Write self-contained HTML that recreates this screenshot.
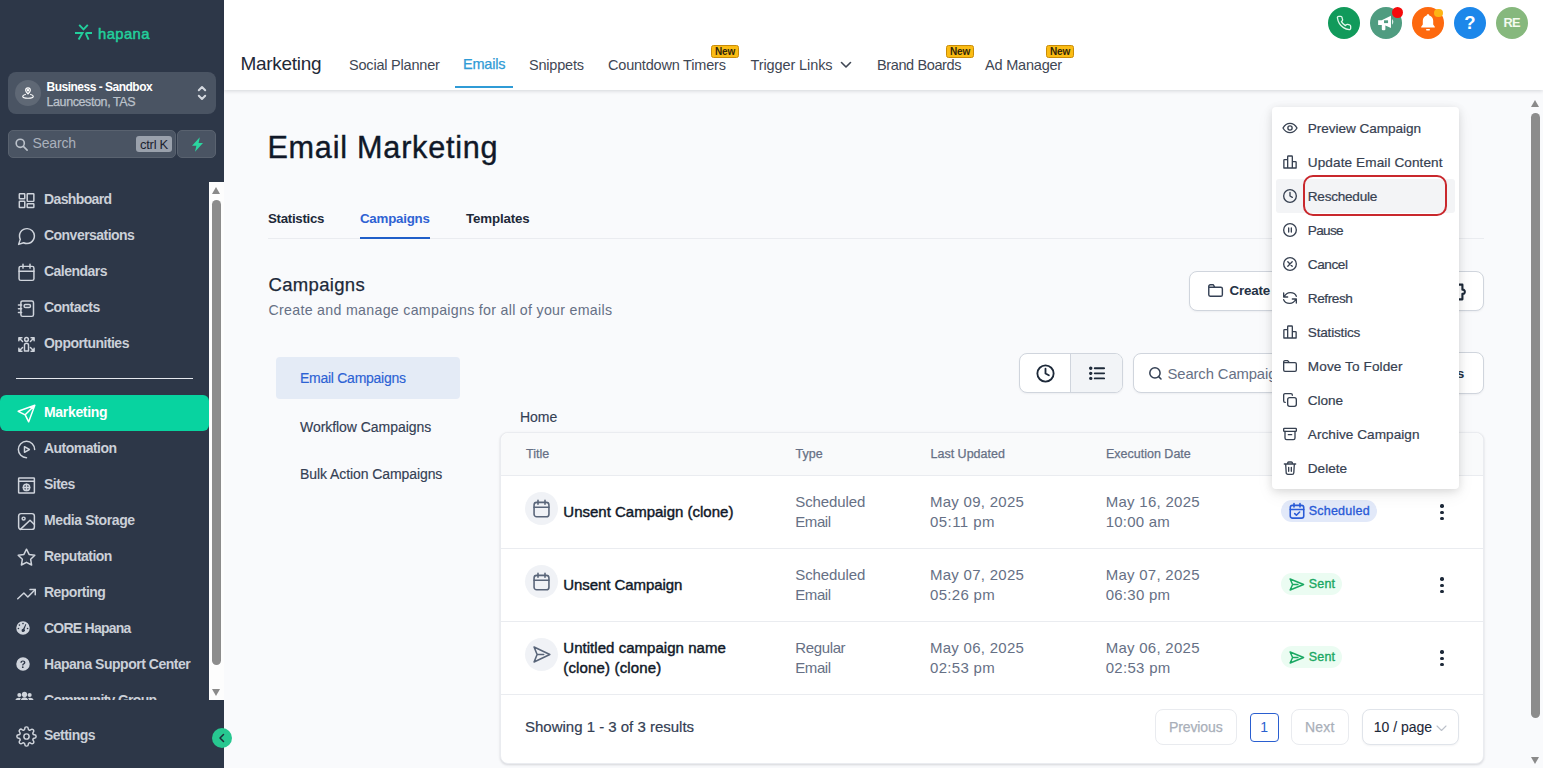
<!DOCTYPE html>
<html lang="en">
<head>
<meta charset="utf-8">
<title>Email Marketing</title>
<style>
*{box-sizing:border-box;margin:0;padding:0}
html,body{width:1543px;height:768px;overflow:hidden;background:#f9fafc;font-family:"Liberation Sans",sans-serif;}
.abs{position:absolute}
svg{display:block}
/* ---------- sidebar ---------- */
#sb{position:absolute;left:0;top:0;width:224px;height:768px;background:#2d3748;color:#dfe3ea;}
#biz{position:absolute;left:8px;top:72px;width:208px;height:42px;border-radius:8px;background:#4a5463;}
#biz .av{position:absolute;left:7px;top:8px;width:26px;height:26px;border-radius:50%;background:#5f6875;}
#biz .t1{position:absolute;left:38.5px;top:8px;font-size:12px;font-weight:700;color:#fff;letter-spacing:-.5px;white-space:nowrap}
#biz .t2{position:absolute;left:38.5px;top:23px;font-size:12.5px;color:#bcc2cb;letter-spacing:-.4px;white-space:nowrap;-webkit-text-stroke:.25px #bcc2cb}
#srch{position:absolute;left:8px;top:130px;width:168px;height:28px;border-radius:5px;background:#4a5463;border:1px solid #59626f}
#srch .ph{position:absolute;left:23.5px;top:4px;font-size:14px;color:#aab1bc;letter-spacing:-.15px}
#srch .kb{position:absolute;left:127px;top:5px;width:36px;height:16px;border-radius:3px;background:#9aa1ac;color:#1c2330;font-size:13px;line-height:17px;text-align:center;letter-spacing:-.3px}
#bolt{position:absolute;left:177px;top:130px;width:39px;height:28px;border-radius:5px;background:#4a5463;border:1px solid #59626f}
.nav{position:absolute;left:0;width:209px;height:36px;}
.nav .tx{position:absolute;left:44px;top:9px;font-size:14px;font-weight:700;color:#cbd0d8;letter-spacing:-.53px;white-space:nowrap;line-height:16px}
.nav svg{position:absolute;left:15.5px;top:7.5px;width:21px;height:21px;stroke:#cfd4dc;fill:none;stroke-width:1.7;stroke-linecap:round;stroke-linejoin:round}
.nav.on{background:#08d3a0;border-radius:6px}
.nav svg.fa{stroke:none;fill:#cfd4dc;left:14px;top:8px;width:18px;height:18px}
.nav.on .tx{color:#fff}
.nav.on svg{stroke:#fff}
#sbscroll{position:absolute;left:209px;top:182px;width:15px;height:518px;background:#fdfdfd}
#sbscroll .th{position:absolute;left:3px;top:18px;width:9px;height:465px;border-radius:5px;background:#8c8c8c}
.tri-u{position:absolute;width:0;height:0;border-left:4.5px solid transparent;border-right:4.5px solid transparent;border-bottom:7px solid #8a8a8a}
.tri-d{position:absolute;width:0;height:0;border-left:4.5px solid transparent;border-right:4.5px solid transparent;border-top:7px solid #8a8a8a}
/* ---------- header ---------- */
#hd{position:absolute;left:224px;top:0;width:1319px;height:90px;background:#fff;box-shadow:0 1px 4px rgba(16,24,40,.16)}
#hd .ttl{position:absolute;left:16.5px;top:53px;font-size:19px;color:#1f2937;letter-spacing:-.3px;line-height:22px}
.tn{position:absolute;top:56px;font-size:14.5px;color:#3f4754;white-space:nowrap;line-height:18px;letter-spacing:-.2px}
.new{position:absolute;top:45px;height:13px;width:28px;border-radius:2.500px;background:#fbbc14;border:1px solid #c98c08;color:#33270a;font-size:10px;font-weight:700;line-height:11px;text-align:center;letter-spacing:-.2px}
.cir{position:absolute;top:7px;width:32px;height:32px;border-radius:50%}
/* ---------- main ---------- */
#main{position:absolute;left:224px;top:90px;width:1319px;height:678px;}
.h1{position:absolute;left:267.4px;top:127.6px;font-size:30.6px;color:#101828;line-height:38px;white-space:nowrap;letter-spacing:.78px;-webkit-text-stroke:.4px #101828}
.tab{position:absolute;top:209.8px;font-size:13.3px;font-weight:700;color:#1d2939;line-height:18px;white-space:nowrap;letter-spacing:-.3px}
.lm{position:absolute;left:300px;font-size:14px;color:#344054;line-height:18px;white-space:nowrap;-webkit-text-stroke:.15px currentColor}
.btn{position:absolute;background:#fff;border:1px solid #d0d5dd;border-radius:8px;box-shadow:0 1px 2px rgba(16,24,40,.05)}
#card{position:absolute;left:500px;top:432px;width:984px;height:332px;background:#fff;border-radius:8px;border:1px solid #eaecf0;box-shadow:0 1px 3px rgba(16,24,40,.1),0 1px 2px rgba(16,24,40,.06)}
.th{position:absolute;top:12.8px;font-size:12.5px;color:#667085;line-height:16px;white-space:nowrap;-webkit-text-stroke:.25px #667085}
.hl{position:absolute;left:0;width:982px;height:1px;background:#eaecf0}
.row{position:absolute;left:0;width:982px;height:73px}
.row .ic{position:absolute;left:24px;top:16.3px;width:33px;height:33px;border-radius:50%;background:#f0f2f6}
.row .ic svg{position:absolute;left:6px;top:6px;width:21px;height:21px;stroke:#596579;fill:none;stroke-width:1.8;stroke-linecap:round;stroke-linejoin:round}
.row .ti{position:absolute;font-size:15px;color:#101828;line-height:20px;white-space:nowrap;-webkit-text-stroke:.42px #101828}
.row .c{position:absolute;font-size:15px;color:#667085;line-height:20px;white-space:nowrap}
.bdg{position:absolute;height:22px;border-radius:11px;font-size:12.5px;line-height:22px;white-space:nowrap;-webkit-text-stroke:.35px currentColor}
.dots{position:absolute;left:939.3px;width:4px}
.dots i{display:block;width:3.4px;height:3.4px;border-radius:50%;background:#1d2939;margin:0 0 2.8px 0}
.pg{position:absolute;background:#fff;border:1px solid #e9ebef;border-radius:8px;font-size:14px;color:#a9afb9;text-align:center;white-space:nowrap;-webkit-text-stroke:.25px currentColor}
/* ---------- dropdown ---------- */
#dd{position:absolute;left:1272px;top:107px;width:187px;height:382px;background:#fff;border-radius:4px;box-shadow:0 2px 8px rgba(0,0,0,.12),0 6px 18px rgba(0,0,0,.06)}
.mi{position:absolute;left:4px;width:179px;height:34px;border-radius:3px}
.mi .tx{position:absolute;left:31.8px;top:9px;font-size:13.6px;color:#374151;line-height:18px;white-space:nowrap;-webkit-text-stroke:.2px #374151}
.mi svg{position:absolute;left:6.4px;top:9px;width:16px;height:16px;stroke:#374151;fill:none;stroke-width:2;stroke-linecap:round;stroke-linejoin:round}
/* ---------- page scrollbar ---------- */
#psb{position:absolute;left:1528px;top:96px;width:15px;height:672px;background:#f9fafc}
#psb .th{position:absolute;left:3px;top:17px;width:9px;height:605px;border-radius:5px;background:#8c8c8c}
</style>
</head>
<body>
<div class="h1">Email Marketing</div>
<div class="tab" style="left:268px">Statistics</div>
<div class="tab" style="left:360px;color:#2f62d3;letter-spacing:-.23px">Campaigns</div>
<div class="tab" style="left:466px;letter-spacing:-.15px">Templates</div>
<div class="abs" style="left:268px;top:238px;width:1216px;height:1px;background:#eaecf0"></div>
<div class="abs" style="left:360px;top:237px;width:70px;height:2px;background:#1f5fc9"></div>

<div class="abs" style="left:268.5px;top:273px;font-size:18.5px;color:#1d2939;line-height:24px;letter-spacing:.32px;-webkit-text-stroke:.25px #1d2939">Campaigns</div>
<div class="abs" style="left:268.5px;top:301px;font-size:14.2px;color:#667085;line-height:18px;white-space:nowrap;letter-spacing:.3px">Create and manage campaigns for all of your emails</div>

<!-- top right buttons -->
<div class="btn" style="left:1189px;top:271px;width:232px;height:39.500px">
  <svg class="abs" style="left:17px;top:10px;width:17px;height:17px" viewBox="0 0 24 24" fill="none" stroke="#344054" stroke-width="2" stroke-linecap="round" stroke-linejoin="round"><path d="M2.500 7.500V6a2.200 2.200 0 0 1 2.200-2.200h4l2.500 3.700M2.500 7.500h17a2.200 2.200 0 0 1 2.200 2.200V18a2.200 2.200 0 0 1-2.200 2.200h-15A2.200 2.200 0 0 1 2.500 18z"/></svg>
  <div class="abs" style="left:39.500px;top:9.500px;font-size:13.4px;font-weight:700;color:#263245;line-height:18px;white-space:nowrap;letter-spacing:-.2px">Create Folder</div>
</div>
<div class="btn" style="left:1432px;top:271px;width:52px;height:39.500px">
  <svg class="abs" style="left:12px;top:9px;width:22px;height:22px" viewBox="0 0 24 24" fill="none" stroke="#1d2939" stroke-width="2.300" stroke-linecap="round" stroke-linejoin="round"><path d="M4 4h5.500c-.8-3.500 5.300-3.500 4.500 0H19v5.500c3.500-.8 3.500 5.300 0 4.500V20H4z"/></svg>
</div>

<!-- view toggle + search -->
<div class="btn" style="left:1019px;top:353px;width:104px;height:39.600px;overflow:hidden">
  <div class="abs" style="left:50px;top:0;width:53px;height:38px;background:#f2f4f7;border-left:1px solid #d0d5dd"></div>
  <svg class="abs" style="left:14.600px;top:8.800px;width:21px;height:21px" viewBox="0 0 24 24" fill="none" stroke="#1d2939" stroke-width="2.100" stroke-linecap="round" stroke-linejoin="round"><circle cx="12" cy="12" r="9.300"/><path d="M12 6.500V12l3.800 2"/></svg>
  <svg class="abs" style="left:68.500px;top:12.300px;width:16.500px;height:14.700px" viewBox="0 0 18 16" fill="none" stroke="#1d2939" stroke-width="2.100" stroke-linecap="round"><path d="M6.300 2.500h10.200M6.300 8h10.200M6.300 13.500h10.200"/><circle cx="1.900" cy="2.500" r=".800" fill="#1d2939"/><circle cx="1.900" cy="8" r=".800" fill="#1d2939"/><circle cx="1.900" cy="13.500" r=".800" fill="#1d2939"/></svg>
</div>
<div class="btn" style="left:1133px;top:353px;width:248px;height:39.600px">
  <svg class="abs" style="left:13.500px;top:12.300px;width:14.500px;height:14.500px" viewBox="0 0 24 24" fill="none" stroke="#344054" stroke-width="2.500" stroke-linecap="round"><circle cx="11.500" cy="11.500" r="8.500"/><path d="M18 18l3.500 3.500"/></svg>
  <div class="abs" style="left:33.500px;top:10.600px;font-size:14.800px;color:#667085;line-height:18px;white-space:nowrap;letter-spacing:-.1px">Search Campaigns</div>
</div>
<div class="btn" style="left:1391px;top:351.500px;width:93px;height:42.700px">
  <div class="abs" style="left:32px;top:12.500px;font-size:13.600px;font-weight:700;color:#263245;line-height:18px;white-space:nowrap;letter-spacing:-.1px">Filters</div>
</div>

<!-- left menu -->
<div class="abs" style="left:276px;top:357px;width:184px;height:42px;border-radius:4px;background:#e4ebf6"></div>
<div class="lm" style="top:369.200px;color:#2c62d4;letter-spacing:-.27px">Email Campaigns</div>
<div class="lm" style="top:417.500px;letter-spacing:-.05px">Workflow Campaigns</div>
<div class="lm" style="top:465.300px;letter-spacing:-.08px">Bulk Action Campaigns</div>

<div class="abs" style="left:520px;top:407.800px;font-size:14px;color:#344054;line-height:18px;letter-spacing:-.05px;-webkit-text-stroke:.15px #344054">Home</div>

<div id="card">
  <div class="abs" style="left:0;top:0;width:982px;height:42px;background:#f9fafb;border-radius:8px 8px 0 0"></div>
  <div class="th" style="left:25px">Title</div>
  <div class="th" style="left:294.5px">Type</div>
  <div class="th" style="left:429.5px">Last Updated</div>
  <div class="th" style="left:605px">Execution Date</div>
  <div class="th" style="left:781px">Status</div>
  <div class="hl" style="top:42px"></div>
  <div class="row" style="top:43px">
    <div class="ic"><svg viewBox="0 0 24 24"><rect x="3.500" y="5" width="17" height="16.500" rx="3"/><path d="M8 2.500v4.500M16 2.500v4.500M3.500 10.500h17"/></svg></div>
    <div class="ti" style="left:62.3px;top:26.1px;letter-spacing:0.0px">Unsent Campaign (clone)</div>
    <div class="c" style="left:294.3px;top:15.8px;letter-spacing:-0.1px">Scheduled</div>
    <div class="c" style="left:294.3px;top:35.8px;letter-spacing:-0.44px">Email</div>
    <div class="c" style="left:429px;top:15.8px;letter-spacing:0.267px">May 09, 2025</div>
    <div class="c" style="left:429px;top:35.8px;letter-spacing:0.438px">05:11 pm</div>
    <div class="c" style="left:604.7px;top:15.8px;letter-spacing:0.283px">May 16, 2025</div>
    <div class="c" style="left:604.7px;top:35.8px;letter-spacing:0.213px">10:00 am</div>
    <div class="bdg" style="left:780px;top:24px;width:96px;background:#e2e9f9;color:#2a5bd7"><svg class="abs" style="left:6.500px;top:2px;width:18px;height:18px" viewBox="0 0 24 24" fill="none" stroke="#2a5bd7" stroke-width="2.100" stroke-linecap="round" stroke-linejoin="round"><rect x="3" y="4.500" width="18" height="17" rx="3"/><path d="M8 2v4.500M16 2v4.500M3 10h18M9 15.500l2.200 2.200 4.300-4.300"/></svg><span class="abs" style="left:27.700px;top:0;letter-spacing:0.233px">Scheduled</span></div>
    <div class="dots" style="top:28.400px"><i></i><i></i><i></i></div>
  </div>
  <div class="hl" style="top:115px"></div>
  <div class="row" style="top:116px">
    <div class="ic"><svg viewBox="0 0 24 24"><rect x="3.500" y="5" width="17" height="16.500" rx="3"/><path d="M8 2.500v4.500M16 2.500v4.500M3.500 10.500h17"/></svg></div>
    <div class="ti" style="left:62.3px;top:26.1px;letter-spacing:-0.067px">Unsent Campaign</div>
    <div class="c" style="left:294.3px;top:15.8px;letter-spacing:-0.1px">Scheduled</div>
    <div class="c" style="left:294.3px;top:35.8px;letter-spacing:-0.44px">Email</div>
    <div class="c" style="left:429px;top:15.8px;letter-spacing:0.267px">May 07, 2025</div>
    <div class="c" style="left:429px;top:35.8px;letter-spacing:0.3px">05:26 pm</div>
    <div class="c" style="left:604.7px;top:15.8px;letter-spacing:0.267px">May 07, 2025</div>
    <div class="c" style="left:604.7px;top:35.8px;letter-spacing:0.25px">06:30 pm</div>
    <div class="bdg" style="left:780px;top:24.300px;width:61px;background:#ebfcf2;color:#1aa863"><svg class="abs" style="left:6.700px;top:2.500px;width:17px;height:17px" viewBox="0 0 24 24" fill="none" stroke="#1aa863" stroke-width="2.100" stroke-linecap="round" stroke-linejoin="round"><path d="M3 4.200L22 12 3 19.800 6.500 12zM6.500 12H14"/></svg><span class="abs" style="left:27.700px;top:0;letter-spacing:0.2px">Sent</span></div>
    <div class="dots" style="top:28.400px"><i></i><i></i><i></i></div>
  </div>
  <div class="hl" style="top:188px"></div>
  <div class="row" style="top:189px">
    <div class="ic"><svg viewBox="0 0 24 24"><path d="M3.500 3.500L21.500 12 3.500 20.500 7 12zM7 12h7.500"/></svg></div>
    <div class="ti" style="left:62.3px;top:16.2px;letter-spacing:0.036px">Untitled campaign name</div>
    <div class="ti" style="left:62.3px;top:36.2px;letter-spacing:0.147px">(clone) (clone)</div>
    <div class="c" style="left:294.3px;top:15.8px;letter-spacing:-0.371px">Regular</div>
    <div class="c" style="left:294.3px;top:35.8px;letter-spacing:-0.44px">Email</div>
    <div class="c" style="left:429px;top:15.8px;letter-spacing:0.267px">May 06, 2025</div>
    <div class="c" style="left:429px;top:35.8px;letter-spacing:0.3px">02:53 pm</div>
    <div class="c" style="left:604.7px;top:15.8px;letter-spacing:0.267px">May 06, 2025</div>
    <div class="c" style="left:604.7px;top:35.8px;letter-spacing:0.3px">02:53 pm</div>
    <div class="bdg" style="left:780px;top:24.300px;width:61px;background:#ebfcf2;color:#1aa863"><svg class="abs" style="left:6.700px;top:2.500px;width:17px;height:17px" viewBox="0 0 24 24" fill="none" stroke="#1aa863" stroke-width="2.100" stroke-linecap="round" stroke-linejoin="round"><path d="M3 4.200L22 12 3 19.800 6.500 12zM6.500 12H14"/></svg><span class="abs" style="left:27.700px;top:0;letter-spacing:0.2px">Sent</span></div>
    <div class="dots" style="top:28.400px"><i></i><i></i><i></i></div>
  </div>
  <div class="hl" style="top:261px"></div>
  <div class="abs" style="left:24px;top:284px;font-size:15px;color:#344054;line-height:20px;white-space:nowrap;letter-spacing:-0.008px;-webkit-text-stroke:.2px #344054">Showing 1 - 3 of 3 results</div>
  <div class="pg" style="left:653.800px;top:276px;width:82px;height:36px;line-height:34px;letter-spacing:-0.09px">Previous</div>
  <div class="pg" style="left:749px;top:280px;width:28.500px;height:28.500px;line-height:26.500px;border-color:#2a5fd0;color:#2a5fd0;border-radius:4px;font-size:14px;-webkit-text-stroke:0">1</div>
  <div class="pg" style="left:789.700px;top:276px;width:58px;height:36px;line-height:34px;letter-spacing:0.2px">Next</div>
  <div class="pg" style="left:860.700px;top:276px;width:97px;height:36px;line-height:34px;color:#1d2939;-webkit-text-stroke:.1px #1d2939;text-align:left;padding-left:11px;box-shadow:0 1px 2px rgba(16,24,40,.05);border-color:#e0e4ea">10 / page
    <svg class="abs" style="left:73px;top:14.500px;width:11px;height:7px" viewBox="0 0 11 7" fill="none" stroke="#bcc1ca" stroke-width="1.100" stroke-linecap="round" stroke-linejoin="round"><path d="M1 1l4.500 4.500L10 1"/></svg>
  </div>
</div>

<div id="psb"><div class="tri-u" style="left:3px;top:4px"></div><div class="th"></div><div class="tri-d" style="left:3px;top:661px"></div></div>

<div id="sb">
  <!-- logo -->
  <svg class="abs" style="left:72px;top:22px;width:24px;height:20px" viewBox="72 22 24 20" fill="none" stroke="#22cf9c" stroke-width="1.9" stroke-linecap="butt" stroke-linejoin="miter">
    <path d="M79.200 24.800L83.500 29.300L87.800 24.800M75 33H82.500L78.600 39.600M92 33H87.400Q85.500 33 86.300 34.600L88.600 39.600"/>
  </svg>
  <div class="abs" style="left:98px;top:21.500px;font-size:14.8px;color:#22cf9c;letter-spacing:.4px;line-height:24px;-webkit-text-stroke:.5px #22cf9c">hapana</div>

  <div id="biz">
    <div class="av"><svg style="position:absolute;left:6px;top:6px;width:14px;height:14px" viewBox="0 0 24 24" fill="none" stroke="#fff" stroke-width="2" stroke-linecap="round" stroke-linejoin="round"><path d="M12 13.5c1.9-2 4-3.900 4-6.3a4 4 0 0 0-8 0c0 2.400 2.100 4.300 4 6.300z"/><circle cx="12" cy="7.300" r="1.200"/><path d="M7.500 14.500C4.800 15.100 3 16.200 3 17.500 3 19.400 7 21 12 21s9-1.600 9-3.500c0-1.300-1.800-2.400-4.500-3"/></svg></div>
    <div class="t1">Business - Sandbox</div>
    <div class="t2">Launceston, TAS</div>
    <svg class="abs" style="left:188px;top:12px;width:12px;height:18px" viewBox="0 0 12 18" fill="none" stroke="#d4d8df" stroke-width="2" stroke-linecap="round" stroke-linejoin="round"><path d="M2.800 6.200L6 3l3.200 3.200M2.800 11.800L6 15l3.200-3.200"/></svg>
  </div>

  <div id="srch">
    <svg class="abs" style="left:4.500px;top:5.500px;width:15px;height:15px" viewBox="0 0 24 24" fill="none" stroke="#bcc2cb" stroke-width="2.600" stroke-linecap="round"><circle cx="10" cy="10" r="6.500"/><path d="M15 15l6 6"/></svg>
    <div class="ph">Search</div>
    <div class="kb">ctrl K</div>
  </div>
  <div id="bolt"><svg class="abs" style="left:13px;top:6px;width:13px;height:15px" viewBox="0 0 13 15"><path d="M8.800 0.300L1 8.800h4.400L4 14.700l8-8.800H7.600z" fill="#2bd6a0"/></svg></div>

  <div class="nav" style="top:182px"><svg viewBox="0 0 24 24"><rect x="3.800" y="4.200" width="6.200" height="5.800" rx=".600"/><rect x="12.800" y="4.200" width="7.600" height="8.800" rx=".600"/><rect x="3.800" y="12.800" width="6.200" height="7.200" rx=".600"/><rect x="12.800" y="15.800" width="7.600" height="4.200" rx=".600"/></svg><div class="tx" style="letter-spacing:-.62px">Dashboard</div></div>
  <div class="nav" style="top:218px"><svg viewBox="0 0 24 24"><path d="M21 11.500a8.400 8.400 0 0 1-.900 3.800 8.500 8.500 0 0 1-7.600 4.700 8.400 8.400 0 0 1-3.800-.900L3 21l1.900-5.700a8.400 8.400 0 0 1-.900-3.800 8.500 8.500 0 0 1 4.700-7.600 8.400 8.400 0 0 1 3.800-.900h.500a8.500 8.500 0 0 1 8 8z"/></svg><div class="tx">Conversations</div></div>
  <div class="nav" style="top:254px"><svg viewBox="0 0 24 24"><rect x="3.500" y="5" width="17" height="16" rx="2"/><path d="M8 2.500v4.500M16 2.500v4.500M3.500 10.500h17"/></svg><div class="tx">Calendars</div></div>
  <div class="nav" style="top:290px"><svg viewBox="0 0 24 24"><rect x="5.600" y="3.500" width="14.400" height="17.500" rx="2"/><path d="M2.800 8h3.600M2.800 12.300h3.600M2.800 16.600h3.600"/><rect x="9.300" y="7.300" width="7.200" height="3.600" rx="1.500"/></svg><div class="tx">Contacts</div></div>
  <div class="nav" style="top:326px"><svg viewBox="0 0 24 24"><circle cx="12" cy="6.200" r="2.100"/><path d="M9.700 12.800a2.300 2.300 0 0 1 4.600 0v6.700h-4.600z"/><path d="M7.500 8.500L3.300 4.300M3.300 7.800V4.300h3.500M16.500 8.500l4.200-4.200M17.200 4.300h3.500v3.500M7.500 15.500l-4.200 4.200M3.300 16.200v3.500h3.500M16.500 15.500l4.200 4.200M20.700 16.200v3.500h-3.500"/></svg><div class="tx">Opportunities</div></div>

  <div class="abs" style="left:16px;top:378px;width:177px;height:1px;background:#e5e8ee"></div>

  <div class="nav on" style="top:395px"><svg viewBox="0 0 24 24"><path d="M21.500 2.500L10.500 13.500M21.500 2.500l-7 19-4-8-8-4z"/></svg><div class="tx" style="letter-spacing:-.32px">Marketing</div></div>
  <div class="nav" style="top:431px"><svg viewBox="0 0 24 24"><path d="M21.300 12A9.300 9.300 0 1 0 12 21.300"/><path d="M9.700 8.800v6.400l5.600-3.200z"/></svg><div class="tx">Automation</div></div>
  <div class="nav" style="top:467px"><svg viewBox="0 0 24 24"><rect x="3" y="3.300" width="18" height="17.400" rx=".800"/><path d="M3 7.200h18"/><circle cx="12" cy="14.200" r="3.600"/><path d="M12 10.600v7.200M8.400 14.200h7.200"/></svg><div class="tx">Sites</div></div>
  <div class="nav" style="top:503px"><svg viewBox="0 0 24 24"><rect x="3" y="3" width="18" height="18" rx="2.800"/><circle cx="8.700" cy="8.700" r="1.700"/><path d="M21 15.500l-5-5L5 21"/></svg><div class="tx" style="letter-spacing:-.38px">Media Storage</div></div>
  <div class="nav" style="top:539px"><svg viewBox="0 0 24 24"><path d="M12 2.500l2.950 6 6.550.950-4.750 4.600 1.100 6.550L12 17.500l-5.850 3.100 1.100-6.550L2.500 9.450l6.550-.950z"/></svg><div class="tx">Reputation</div></div>
  <div class="nav" style="top:575px"><svg viewBox="0 0 24 24"><path d="M22 7.500l-8.500 8.500-4.500-4.500L2 18"/><path d="M16 7.500h6v6"/></svg><div class="tx">Reporting</div></div>
  <div class="nav" style="top:611px"><svg class="fa" viewBox="0 0 24 24"><path fill-rule="evenodd" d="M12 3a9 9 0 1 0 0 18 9 9 0 0 0 0-18zm0 2a1.100 1.100 0 1 1 0 2.200A1.100 1.100 0 0 1 12 5zM7.200 7a1.100 1.100 0 1 1 0 2.200 1.100 1.100 0 0 1 0-2.200zM5.900 11.500a1.100 1.100 0 1 1 0 2.200 1.100 1.100 0 0 1 0-2.200zm12.200 0a1.100 1.100 0 1 1 0 2.200 1.100 1.100 0 0 1 0-2.200zM15.400 6.600l1 .4-2.400 6.700a2.200 2.200 0 1 1-3.900 1.600c0-1.200.9-2.100 2.100-2.200z"/></svg><div class="tx" style="letter-spacing:-.75px">CORE Hapana</div></div>
  <div class="nav" style="top:647px"><svg class="fa" viewBox="0 0 24 24"><path fill-rule="evenodd" d="M12 3a9 9 0 1 0 0 18 9 9 0 0 0 0-18zm-.1 4.200c2 0 3.300 1.100 3.300 2.700 0 1.200-.6 1.900-1.600 2.500-.8.500-1 .8-1 1.600h-1.700v-.4c0-1.100.4-1.700 1.300-2.300.8-.5 1.100-.8 1.100-1.400 0-.6-.5-1.100-1.400-1.100-.9 0-1.500.5-1.600 1.400H8.500c.1-1.900 1.400-3 3.400-3zm-.2 7.900a1.150 1.150 0 1 1 0 2.300 1.150 1.150 0 0 1 0-2.300z"/></svg><div class="tx" style="letter-spacing:-.48px">Hapana Support Center</div></div>
  <div class="abs" style="left:0;top:683px;width:209px;height:17px;overflow:hidden"><div class="nav" style="top:0"><svg class="fa" style="left:15px;width:19px;height:19px;top:8px" viewBox="0 0 24 24"><circle cx="5.500" cy="5" r="2.600"/><circle cx="18.500" cy="5" r="2.600"/><circle cx="12" cy="4.300" r="3.300"/><path d="M0 14c0-3.500 2-5.500 5-5.500 1 0 1.800.2 2.500.7C6.500 10.500 6 12 6 14zM24 14c0-3.500-2-5.500-5-5.500-1 0-1.800.2-2.500.7 1 1.300 1.500 2.800 1.500 4.800zM7 14c0-3.500 2-6 5-6s5 2.500 5 6z"/></svg><div class="tx" style="letter-spacing:-.7px">Community Group</div></div></div>
  <div class="abs" style="left:0;top:700px;width:209px;height:68px;background:#2d3748"></div>
  <div class="nav" style="top:718px"><svg viewBox="0 0 24 24"><circle cx="12" cy="12" r="3"/><path d="M19.400 15a1.650 1.650 0 0 0 .330 1.820l.060.060a2 2 0 1 1-2.830 2.830l-.060-.060a1.650 1.650 0 0 0-1.820-.330 1.650 1.650 0 0 0-1 1.510V21a2 2 0 0 1-4 0v-.090A1.650 1.650 0 0 0 9 19.400a1.650 1.650 0 0 0-1.820.330l-.060.060a2 2 0 1 1-2.830-2.830l.060-.060a1.650 1.650 0 0 0 .330-1.820 1.650 1.650 0 0 0-1.510-1H3a2 2 0 0 1 0-4h.090A1.650 1.650 0 0 0 4.600 9a1.650 1.650 0 0 0-.330-1.820l-.060-.060a2 2 0 1 1 2.830-2.830l.060.060a1.650 1.650 0 0 0 1.820.330H9a1.650 1.650 0 0 0 1-1.510V3a2 2 0 0 1 4 0v.090a1.650 1.650 0 0 0 1 1.510 1.650 1.650 0 0 0 1.820-.330l.060-.060a2 2 0 1 1 2.830 2.830l-.060.060a1.650 1.650 0 0 0-.330 1.820V9a1.650 1.650 0 0 0 1.510 1H21a2 2 0 0 1 0 4h-.090a1.650 1.650 0 0 0-1.510 1z"/></svg><div class="tx">Settings</div></div>

  <div id="sbscroll"><div class="tri-u" style="left:3px;top:5px"></div><div class="th"></div><div class="tri-d" style="left:3px;top:507px"></div></div>
</div>
<div class="abs" style="left:212px;top:727.500px;width:20px;height:20px;border-radius:50%;background:#27c790"><svg class="abs" style="left:6px;top:5px;width:8px;height:10px" viewBox="0 0 8 10" fill="none" stroke="#1f2a37" stroke-width="1.500" stroke-linecap="round" stroke-linejoin="round"><path d="M5.500 1.500L2 5l3.500 3.500"/></svg></div>

<div id="hd">
  <div class="ttl">Marketing</div>
  <div class="tn" style="left:125px">Social Planner</div>
  <div class="tn" style="left:239px;color:#2f9bd6;-webkit-text-stroke:.25px #2f9bd6;top:55px">Emails</div>
  <div class="abs" style="left:231px;top:85.500px;width:58px;height:2.500px;background:#2f9bd6"></div>
  <div class="tn" style="left:305px">Snippets</div>
  <div class="tn" style="left:384px">Countdown Timers</div>
  <div class="new" style="left:487px">New</div>
  <div class="tn" style="left:526.5px;letter-spacing:-.1px">Trigger Links</div>
  <svg class="abs" style="left:616px;top:61px;width:12px;height:8px" viewBox="0 0 12 8" fill="none" stroke="#3f4754" stroke-width="1.600" stroke-linecap="round" stroke-linejoin="round"><path d="M1.500 1.500L6 6l4.500-4.500"/></svg>
  <div class="tn" style="left:653px;letter-spacing:-.38px">Brand Boards</div>
  <div class="new" style="left:722px">New</div>
  <div class="tn" style="left:761px">Ad Manager</div>
  <div class="new" style="left:822px">New</div>

  <!-- round buttons -->
  <div class="cir" style="left:1104px;background:#119a5b"><svg class="abs" style="left:8px;top:8px;width:16px;height:16px" viewBox="0 0 24 24" fill="none" stroke="#dff7ea" stroke-width="2" stroke-linecap="round" stroke-linejoin="round"><path d="M22 16.920v3a2 2 0 0 1-2.180 2 19.790 19.790 0 0 1-8.630-3.070 19.500 19.500 0 0 1-6-6 19.790 19.790 0 0 1-3.070-8.670A2 2 0 0 1 4.110 2h3a2 2 0 0 1 2 1.720 12.840 12.840 0 0 0 .7 2.810 2 2 0 0 1-.450 2.110L8.090 9.910a16 16 0 0 0 6 6l1.270-1.270a2 2 0 0 1 2.110-.450 12.840 12.840 0 0 0 2.810.7A2 2 0 0 1 22 16.920z"/></svg></div>
  <div class="cir" style="left:1146px;background:#4f9c80"><svg class="abs" style="left:7px;top:7px;width:19px;height:18px" viewBox="0 0 17 16"><path d="M1 5.500h3.200L12.500 1.500v11L7.500 10.200v3.300q0 1-1 1H5.300q-1 0-1-1V9.700H1z" fill="#fff"/><path d="M13.600 4.500q2 2.500 0 5z" fill="#fff"/><rect x="6.300" y="5.600" width="3.600" height="2.500" fill="#4f9c80"/></svg></div>
  <div class="abs" style="left:1168px;top:7px;width:11px;height:11px;border-radius:50%;background:#f50a0a"></div>
  <div class="cir" style="left:1188px;background:#fd690f"><svg class="abs" style="left:8px;top:6px;width:16px;height:20px" viewBox="0 0 16 20"><path d="M8 1.200c.8 0 1.300.5 1.300 1.200 2.500.7 3.900 2.700 3.900 5.400v3.600l1.600 2.300v.8H1.200v-.8l1.600-2.300V7.800c0-2.700 1.400-4.700 3.900-5.400C6.700 1.700 7.200 1.200 8 1.200z" fill="#fff"/><rect x="6" y="16" width="4" height="1.600" rx=".8" fill="#fff"/></svg></div>
  <div class="abs" style="left:1210px;top:8.500px;width:8.500px;height:8.500px;border-radius:50%;background:#fdb515"></div>
  <div class="cir" style="left:1230px;background:#1c87ea;color:#fff;font-size:18.500px;font-weight:700;line-height:32px;text-align:center">?</div>
  <div class="cir" style="left:1272px;background:#86b87d;color:#f4faef;font-size:12.800px;font-weight:700;line-height:32px;text-align:center;letter-spacing:-.7px;text-indent:-.7px">RE</div>
</div>

<div id="dd">
  <div class="mi" style="top:4px"><svg viewBox="0 0 24 24"><path d="M1.500 12S5.500 5 12 5s10.500 7 10.500 7-4 7-10.500 7S1.500 12 1.500 12z"/><circle cx="12" cy="12" r="3.200"/></svg><div class="tx" style="letter-spacing:-0.048px">Preview Campaign</div></div>
  <div class="mi" style="top:38px"><svg viewBox="0 0 24 24"><path d="M8.500 8.500H3.800a1 1 0 0 0-1 1V21h5.700M8.500 21h7M8.500 21V4a1 1 0 0 1 1-1h5a1 1 0 0 1 1 1v17M15.500 11.500h4.700a1 1 0 0 1 1 1V21h-5.700"/></svg><div class="tx" style="letter-spacing:0.093px">Update Email Content</div></div>
  <div class="mi" style="top:72px;background:#f3f4f6"><svg viewBox="0 0 24 24"><circle cx="12" cy="12" r="9.500"/><path d="M12 6.500V12l3.500 2"/></svg><div class="tx" style="letter-spacing:-0.254px">Reschedule</div></div>
  <div class="mi" style="top:106px"><svg viewBox="0 0 24 24"><circle cx="12" cy="12" r="9.500"/><path d="M10 9v6M14 9v6"/></svg><div class="tx" style="letter-spacing:-0.68px">Pause</div></div>
  <div class="mi" style="top:140px"><svg viewBox="0 0 24 24"><circle cx="12" cy="12" r="9.500"/><path d="M8.700 8.700l6.600 6.600M15.300 8.700l-6.600 6.600"/></svg><div class="tx" style="letter-spacing:-0.422px">Cancel</div></div>
  <div class="mi" style="top:174px"><svg viewBox="0 0 24 24" style="transform:scaleX(-1)"><path d="M2.500 9.500s2-5.500 9-5.500c5 0 8 3.500 9.500 6.500M21.500 4.500V10.500h-6M21.500 14.500s-2 5.500-9 5.500c-5 0-8-3.500-9.500-6.500M2.500 19.500V13.500h6"/></svg><div class="tx" style="letter-spacing:-0.414px">Refresh</div></div>
  <div class="mi" style="top:208px"><svg viewBox="0 0 24 24"><path d="M8.500 8.500H3.800a1 1 0 0 0-1 1V21h5.700M8.500 21h7M8.500 21V4a1 1 0 0 1 1-1h5a1 1 0 0 1 1 1v17M15.500 11.500h4.700a1 1 0 0 1 1 1V21h-5.700"/></svg><div class="tx" style="letter-spacing:-0.2px">Statistics</div></div>
  <div class="mi" style="top:242px"><svg viewBox="0 0 24 24"><path d="M2.500 7V6a2 2 0 0 1 2-2h4l2.500 3M2.500 7h17a2 2 0 0 1 2 2v9a2 2 0 0 1-2 2h-15a2 2 0 0 1-2-2z"/></svg><div class="tx" style="letter-spacing:0.101px">Move To Folder</div></div>
  <div class="mi" style="top:276px"><svg viewBox="0 0 24 24"><rect x="8.500" y="8.500" width="13" height="13" rx="3"/><path d="M5 15.500H4.500a2 2 0 0 1-2-2v-9a2 2 0 0 1 2-2h9a2 2 0 0 1 2 2V5"/></svg><div class="tx" style="letter-spacing:-0.066px">Clone</div></div>
  <div class="mi" style="top:310px"><svg viewBox="0 0 24 24"><rect x="2.500" y="3.500" width="19" height="4.500" rx="1"/><path d="M4.500 8v10a2.500 2.500 0 0 0 2.500 2.500h10a2.500 2.500 0 0 0 2.500-2.500V8M9.500 13h5"/></svg><div class="tx" style="letter-spacing:0.044px">Archive Campaign</div></div>
  <div class="mi" style="top:344px"><svg viewBox="0 0 24 24"><path d="M3.500 6h17M8.500 6V4.500a1.500 1.500 0 0 1 1.500-1.500h4a1.500 1.500 0 0 1 1.500 1.500V6M5.500 6l.8 13a2.500 2.500 0 0 0 2.500 2.500h6.400a2.500 2.500 0 0 0 2.500-2.500l.8-13M10 11v6M14 11v6"/></svg><div class="tx" style="letter-spacing:0.005px">Delete</div></div>
</div>
<div class="abs" style="left:1302.800px;top:175.200px;width:144.400px;height:41.300px;border:2.500px solid #c9282d;border-radius:10px"></div>

</body>
</html>
